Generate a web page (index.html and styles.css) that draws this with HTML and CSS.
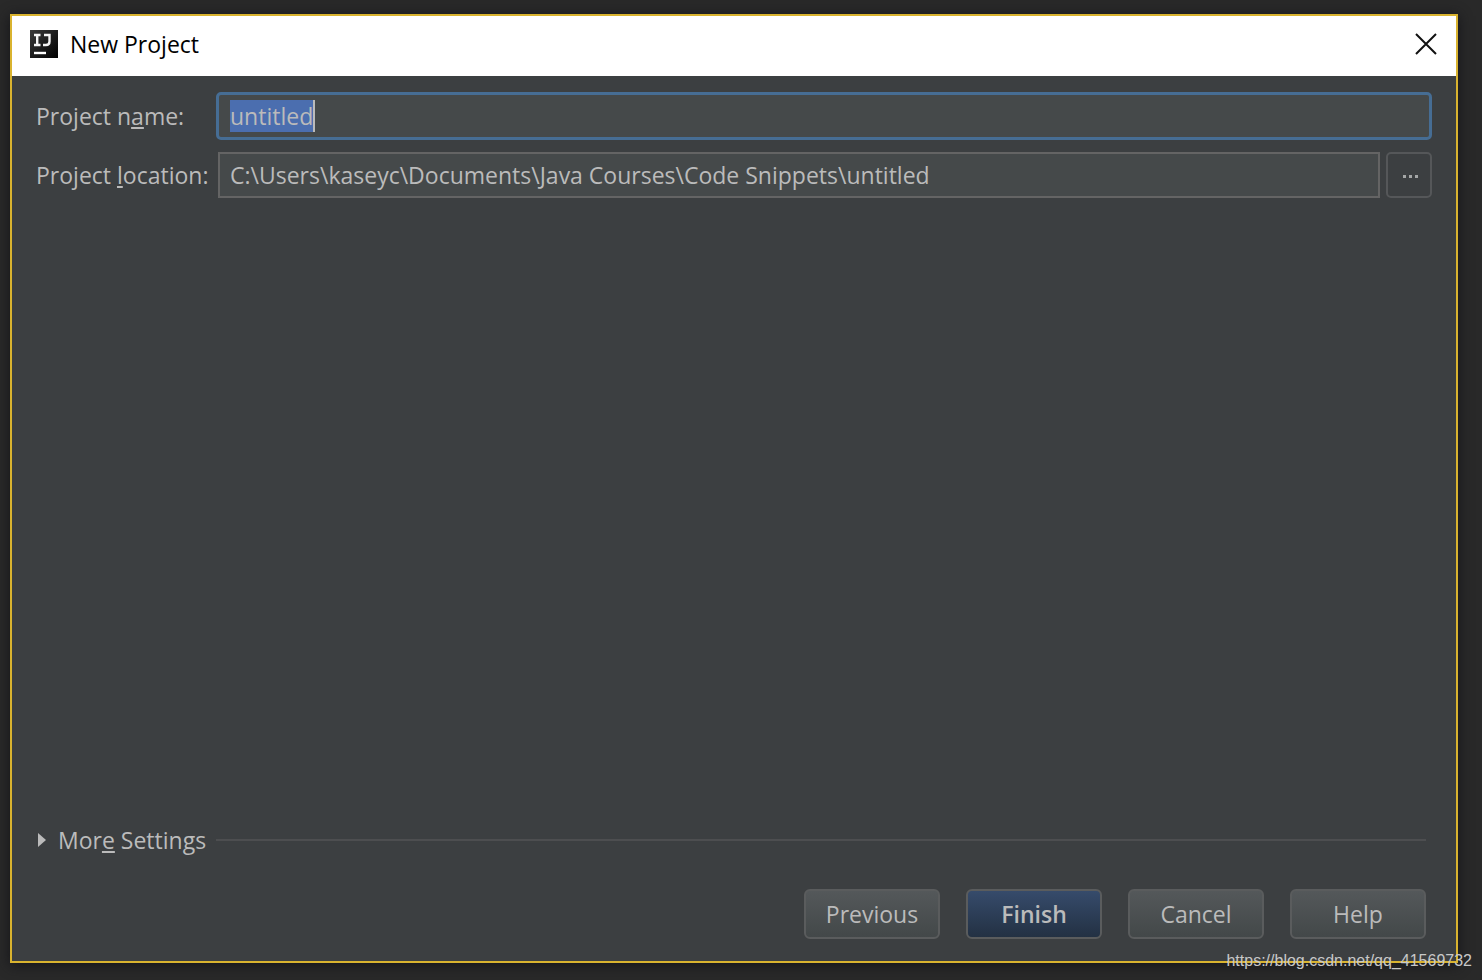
FILE: index.html
```html
<!DOCTYPE html>
<html lang="en">
<head>
<meta charset="utf-8">
<title>New Project</title>
<link rel="stylesheet" href="styles.css">
</head>
<body>
<main class="dialog">
  <header class="titlebar">
    <svg class="logo" viewBox="0 0 28 28" aria-hidden="true">
      <defs><linearGradient id="shade" x1="0" y1="0" x2="1" y2="1"><stop offset="0" stop-color="#3a3a3a"/><stop offset="1" stop-color="#000"/></linearGradient></defs>
      <rect width="28" height="28" fill="url(#shade)"/>
      <path d="M4 5h6.500M7.200 5v10M4 15h6.500M14 5h5.500v6.500q0 3.500-3.500 3.500H13" fill="none" stroke="#f4f4f4" stroke-width="2.400"/>
      <path d="M4 23h12" stroke="#fff" stroke-width="2.400"/>
    </svg>
    <h1 class="title">New Project</h1>
    <button class="close" type="button" aria-label="Close">
      <svg class="close-icon" viewBox="0 0 22 22" aria-hidden="true"><path d="M1 1l20 20M21 1L1 21" stroke="#111" stroke-width="2"/></svg>
    </button>
  </header>
  <form class="content">
    <div class="fields">
      <label class="label" for="name">Project n<u>a</u>me:</label>
      <div class="field field-active"><input class="input input-selected" id="name" type="text" value="untitled"></div>
      <label class="label" for="location">Project <u>l</u>ocation:</label>
      <div class="location">
        <input class="input field" id="location" type="text" value="C:\Users\kaseyc\Documents\Java Courses\Code Snippets\untitled">
        <button class="browse" type="button" aria-label="Browse">
          <svg class="dots" viewBox="0 0 16 4" aria-hidden="true"><path d="M0 1h3v3H0zM6 1h3v3H6zM12 1h3v3h-3z" fill="#a4a6a6"/></svg>
        </button>
      </div>
    </div>
    <button class="more" type="button">
      <svg class="arrow" viewBox="0 0 8 14" aria-hidden="true"><path d="M0 0l8 7-8 7z" fill="#bbb"/></svg>
      <span>Mor<u>e</u> Settings</span>
      <span class="rule"></span>
    </button>
    <div class="actions">
      <button class="action" type="button">Previous</button>
      <button class="action action-primary" type="button">Finish</button>
      <button class="action" type="button">Cancel</button>
      <button class="action" type="button">Help</button>
    </div>
  </form>
</main>
<p class="watermark">https://blog.csdn.net/qq_41569732</p>
</body>
</html>
```

FILE: styles.css
```css
* {
  box-sizing: border-box;
}

body {
  display: flex;
  min-height: 100vh;
  margin: 0;
  padding: 14px 24px 17px 10px;
  background: #292929;
  color: #bbbbbb;
  font: 23px/32px "Open Sans", "Noto Sans", sans-serif;
}

button,
input {
  margin: 0;
  color: inherit;
  font: inherit;
}

u {
  text-decoration-thickness: 2px;
  text-underline-offset: 2px;
  text-decoration-skip-ink: none;
}

.dialog {
  display: flex;
  flex: 1;
  flex-direction: column;
  border: 2px solid #d9b32f;
  background: #3c3f41;
  box-shadow: 0 2px 12px #141418;
}

.titlebar {
  display: flex;
  align-items: center;
  height: 60px;
  padding: 0 18px 4px;
  background: #ffffff;
  color: #000000;
}

.logo {
  width: 28px;
  height: 28px;
  margin-right: 12px;
}

.title {
  flex: 1;
  margin: 0;
  font-size: inherit;
  font-weight: 400;
}

.close {
  display: flex;
  padding: 0;
  border: 0;
  background: none;
}

.close-icon {
  width: 24px;
  height: 22px;
}

.content {
  display: flex;
  flex: 1;
  flex-direction: column;
  padding: 16px 24px 22px;
}

.fields {
  display: grid;
  grid-template-columns: 172px 1fr;
  gap: 12px 8px;
  align-items: center;
}

.label {
  white-space: nowrap;
}

.field {
  padding: 0 10px;
  border: 2px solid #646464;
  background: #45494a;
}

.field-active {
  display: flex;
  align-items: center;
  height: 48px;
  padding: 0 11px;
  border: 3px solid #466d94;
  border-radius: 5px;
}

.input {
  min-width: 0;
  outline: 0;
}

.input-selected {
  field-sizing: content;
  padding: 0;
  border: 0;
  border-right: 2px solid #bbbbbb;
  background: #4b6eaf;
}

.location {
  display: flex;
  gap: 6px;
  height: 46px;
  padding-left: 2px;
}

.location .input {
  flex: 1;
}

.browse {
  display: flex;
  align-items: center;
  justify-content: center;
  width: 46px;
  padding: 2px 0 0 4px;
  border: 2px solid #555759;
  border-radius: 5px;
  background: #3c3f41;
}

.dots {
  width: 16px;
  height: 4px;
}

.more {
  display: flex;
  align-items: center;
  margin-top: auto;
  padding: 0 6px 0 2px;
  border: 0;
  background: none;
  text-align: left;
}

.arrow {
  width: 8px;
  height: 14px;
  margin-right: 12px;
}

.rule {
  flex: 1;
  height: 2px;
  margin-left: 10px;
  background: #4d4e50;
}

.actions {
  display: flex;
  justify-content: flex-end;
  gap: 26px;
  margin-top: 33px;
  padding-right: 6px;
}

.action {
  width: 136px;
  height: 50px;
  padding: 0;
  border: 2px solid #5a5c5d;
  border-radius: 6px;
  background: linear-gradient(#54585a, #434849);
}

.action-primary {
  background: linear-gradient(#364b6b, #233143);
  font-weight: 600;
}

.watermark {
  position: absolute;
  right: 10px;
  bottom: 8px;
  margin: 0;
  color: #c8c8c8;
  font: 16px/22px "Liberation Sans", Arial, sans-serif;
}
```
